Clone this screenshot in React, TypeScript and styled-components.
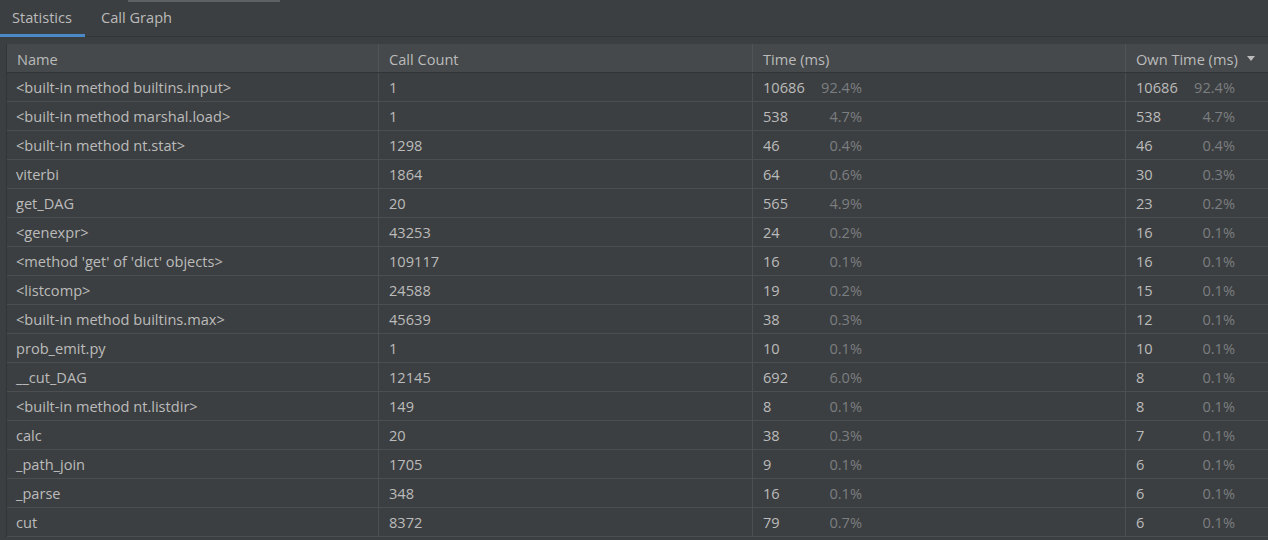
import React from "react";
import styled, { createGlobalStyle } from "styled-components";

const Global = createGlobalStyle`
  html, body { margin: 0; padding: 0; background: #3c3f41; }
  body { font-family: "Open Sans", "Noto Sans", sans-serif; font-size: 14.6px; color: #bbbbbb; overflow: hidden; }
  * { box-sizing: border-box; }
`;

const Page = styled.div`
  width: 1268px;
  height: 540px;
  background: #3c3f41;
  display: flex;
  flex-direction: column;
`;

const TopStrip = styled.div`
  height: 2px;
  width: 152px;
  margin-left: 128px;
  background: #5e6163;
  flex: none;
`;

const TabBar = styled.div`
  height: 35px;
  display: flex;
  align-items: stretch;
  gap: 4px;
  border-bottom: 1px solid #323436;
  flex: none;
`;

const Tab = styled.div<{ $active?: boolean }>`
  display: flex;
  align-items: center;
  padding: 0 13px 2px 12px;
  color: #bbbbbb;
  border-bottom: 3px solid ${(p) => (p.$active ? "#4a88c7" : "transparent")};
  margin-bottom: -1px;
`;

const Table = styled.div`
  margin-top: 7px;
  margin-left: 6px;
  border-left: 1px solid #323436;
  display: flex;
  flex-direction: column;
`;

const Row = styled.div<{ $header?: boolean }>`
  display: grid;
  grid-template-columns: 372px 374px 373px 1fr;
  height: 29px;
  background: ${(p) => (p.$header ? "#45494b" : "#3c3f41")};
  border-bottom: 1px solid ${(p) => (p.$header ? "#323436" : "#4b4f51")};
`;

const Cell = styled.div<{ $last?: boolean }>`
  display: flex;
  align-items: center;
  padding-left: 10px;
  border-right: ${(p) => (p.$last ? "none" : "1px solid #4b4f51")};
  white-space: nowrap;
  overflow: hidden;
  &:first-child { padding-left: 9px; }
`;

const HeadCell = styled(Cell)`
  padding-top: 1px;
  padding-left: 10px;
  &:first-child { padding-left: 10px; }
  border-right: ${(p) => (p.$last ? "none" : "1px solid #505456")};
`;

const Arrow = styled.span`
  margin-left: 9px;
  width: 0;
  height: 0;
  border-left: 4.5px solid transparent;
  border-right: 4.5px solid transparent;
  border-top: 5px solid #bbbbbb;
`;

const Pair = styled.div`
  width: 99px;
  display: flex;
  justify-content: space-between;
`;

const Pct = styled.span`
  color: #7b7e80;
`;

type R = [string, string, string, string, string, string];

const rows: R[] = [
  ["<built-in method builtins.input>", "1", "10686", "92.4%", "10686", "92.4%"],
  ["<built-in method marshal.load>", "1", "538", "4.7%", "538", "4.7%"],
  ["<built-in method nt.stat>", "1298", "46", "0.4%", "46", "0.4%"],
  ["viterbi", "1864", "64", "0.6%", "30", "0.3%"],
  ["get_DAG", "20", "565", "4.9%", "23", "0.2%"],
  ["<genexpr>", "43253", "24", "0.2%", "16", "0.1%"],
  ["<method 'get' of 'dict' objects>", "109117", "16", "0.1%", "16", "0.1%"],
  ["<listcomp>", "24588", "19", "0.2%", "15", "0.1%"],
  ["<built-in method builtins.max>", "45639", "38", "0.3%", "12", "0.1%"],
  ["prob_emit.py", "1", "10", "0.1%", "10", "0.1%"],
  ["__cut_DAG", "12145", "692", "6.0%", "8", "0.1%"],
  ["<built-in method nt.listdir>", "149", "8", "0.1%", "8", "0.1%"],
  ["calc", "20", "38", "0.3%", "7", "0.1%"],
  ["_path_join", "1705", "9", "0.1%", "6", "0.1%"],
  ["_parse", "348", "16", "0.1%", "6", "0.1%"],
  ["cut", "8372", "79", "0.7%", "6", "0.1%"],
];

export default function App() {
  return (
    <Page>
      <Global />
      <TopStrip />
      <TabBar>
        <Tab $active>Statistics</Tab>
        <Tab>Call Graph</Tab>
      </TabBar>
      <Table>
        <Row $header>
          <HeadCell>Name</HeadCell>
          <HeadCell>Call Count</HeadCell>
          <HeadCell>Time (ms)</HeadCell>
          <HeadCell $last>
            Own Time (ms)
            <Arrow />
          </HeadCell>
        </Row>
        {rows.map((r, i) => (
          <Row key={i}>
            <Cell>{r[0]}</Cell>
            <Cell>{r[1]}</Cell>
            <Cell>
              <Pair>
                <span>{r[2]}</span>
                <Pct>{r[3]}</Pct>
              </Pair>
            </Cell>
            <Cell $last>
              <Pair>
                <span>{r[4]}</span>
                <Pct>{r[5]}</Pct>
              </Pair>
            </Cell>
          </Row>
        ))}
      </Table>
    </Page>
  );
}
